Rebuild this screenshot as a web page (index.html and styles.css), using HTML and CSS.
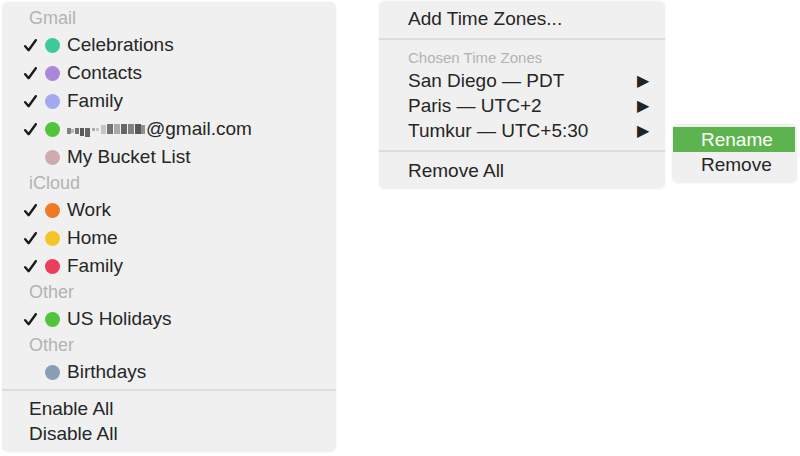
FILE: index.html
```html
<!DOCTYPE html>
<html>
<head>
<meta charset="utf-8">
<link rel="stylesheet" href="styles.css">
</head>
<body>
<div class="stage">
  <div class="menu cal">
    <div class="hdr">Gmail</div>
    <div class="item"><svg class="chk" viewBox="0 0 13 13"><path d="M1.2 7.2 L4.6 11.2 L11.8 1.2"/></svg><span class="dot" style="background:#3fc89b"></span><span>Celebrations</span></div>
    <div class="item"><svg class="chk" viewBox="0 0 13 13"><path d="M1.2 7.2 L4.6 11.2 L11.8 1.2"/></svg><span class="dot" style="background:#a987d9"></span><span>Contacts</span></div>
    <div class="item"><svg class="chk" viewBox="0 0 13 13"><path d="M1.2 7.2 L4.6 11.2 L11.8 1.2"/></svg><span class="dot" style="background:#a2a9ef"></span><span>Family</span></div>
    <div class="item"><svg class="chk" viewBox="0 0 13 13"><path d="M1.2 7.2 L4.6 11.2 L11.8 1.2"/></svg><span class="dot" style="background:#4fc53c"></span><svg class="mosaic" viewBox="0 0 79 14"><rect x="0" y="5" width="4" height="6" fill="#666"/><rect x="4" y="6" width="3" height="4" fill="#aaa"/><rect x="8" y="5" width="4" height="6" fill="#555"/><rect x="13" y="5" width="4" height="8" fill="#333"/><rect x="18" y="5" width="5" height="9" fill="#444"/><rect x="25" y="5" width="3" height="3" fill="#999"/><rect x="29" y="5" width="3" height="3" fill="#bbb"/><rect x="34" y="2" width="5" height="9" fill="#bbb"/><rect x="40" y="1" width="6" height="10" fill="#555"/><rect x="47" y="1" width="6" height="10" fill="#999"/><rect x="54" y="1" width="6" height="10" fill="#444"/><rect x="61" y="1" width="6" height="10" fill="#666"/><rect x="68" y="1" width="6" height="10" fill="#333"/><rect x="74" y="2" width="4" height="9" fill="#777"/></svg><span>@gmail.com</span></div>
    <div class="item"><span class="nochk"></span><span class="dot" style="background:#cfaaae"></span><span>My Bucket List</span></div>
    <div class="hdr">iCloud</div>
    <div class="item"><svg class="chk" viewBox="0 0 13 13"><path d="M1.2 7.2 L4.6 11.2 L11.8 1.2"/></svg><span class="dot" style="background:#ee7b24"></span><span>Work</span></div>
    <div class="item"><svg class="chk" viewBox="0 0 13 13"><path d="M1.2 7.2 L4.6 11.2 L11.8 1.2"/></svg><span class="dot" style="background:#f4c52a"></span><span>Home</span></div>
    <div class="item"><svg class="chk" viewBox="0 0 13 13"><path d="M1.2 7.2 L4.6 11.2 L11.8 1.2"/></svg><span class="dot" style="background:#ec3d5b"></span><span>Family</span></div>
    <div class="hdr">Other</div>
    <div class="item"><svg class="chk" viewBox="0 0 13 13"><path d="M1.2 7.2 L4.6 11.2 L11.8 1.2"/></svg><span class="dot" style="background:#50c53c"></span><span>US Holidays</span></div>
    <div class="hdr">Other</div>
    <div class="item"><span class="nochk"></span><span class="dot" style="background:#8b9cb5"></span><span>Birthdays</span></div>
    <div class="sep sep-l"></div>
    <div class="plain">Enable All</div>
    <div class="plain">Disable All</div>
  </div>

  <div class="menu tz">
    <div class="plain">Add Time Zones...</div>
    <div class="sep sep-r"></div>
    <div class="sub-hdr">Chosen Time Zones</div>
    <div class="plain arrow-row"><span>San Diego — PDT</span><span class="arr">▶</span></div>
    <div class="plain arrow-row"><span>Paris — UTC+2</span><span class="arr">▶</span></div>
    <div class="plain arrow-row"><span>Tumkur — UTC+5:30</span><span class="arr">▶</span></div>
    <div class="sep sep-r"></div>
    <div class="plain">Remove All</div>
  </div>

  <div class="menu submenu">
    <div class="sub-item active">Rename</div>
    <div class="sub-item">Remove</div>
  </div>
</div>
</body>
</html>
```

FILE: styles.css
```css
* { box-sizing: border-box; }
html, body {
  margin: 0;
  padding: 0;
  background: #ffffff;
  font-family: "Liberation Sans", Arial, sans-serif;
  color: #262626;
}
.stage {
  position: relative;
  width: 800px;
  height: 456px;
  overflow: hidden;
}
.menu {
  position: absolute;
  background: #f0f0f0;
  border-radius: 6px;
  box-shadow: 0 0 0 1px rgba(0,0,0,0.025);
  display: flex;
  flex-direction: column;
}
.cal {
  left: 2px;
  top: 2px;
  width: 334px;
  height: 450px;
  padding-top: 4px;
}
.cal .hdr,
.cal .plain {
  padding-left: 27px;
}
.hdr {
  height: 25px;
  line-height: 25px;
  font-size: 18px;
  color: #b3b3b3;
}
.item {
  height: 28px;
  display: flex;
  align-items: center;
  padding-left: 22px;
  font-size: 19px;
}
.chk {
  width: 13px;
  height: 13px;
  flex: none;
  margin-top: 1px;
}
.chk path {
  fill: none;
  stroke: #1c1c1c;
  stroke-width: 2.4;
  stroke-linecap: round;
  stroke-linejoin: round;
}
.nochk {
  width: 13px;
  flex: none;
}
.dot {
  width: 15px;
  height: 15px;
  border-radius: 50%;
  margin-left: 8px;
  margin-right: 7px;
  flex: none;
}
.mosaic {
  width: 79px;
  height: 14px;
  flex: none;
  opacity: 0.8;
  margin-top: 1px;
}
.sep {
  flex: none;
  position: relative;
}
.sep::after {
  content: "";
  position: absolute;
  left: 0;
  right: 0;
  height: 2px;
  background: #dcdcdc;
}
.sep-l { height: 10px; }
.sep-l::after { top: 2.5px; }
.sep-r { height: 15px; }
.sep-r::after { top: 7px; }
.plain {
  height: 25px;
  line-height: 25px;
  padding-left: 29px;
  font-size: 19px;
}
.tz {
  left: 379px;
  top: 1px;
  width: 286px;
  height: 188px;
  padding-top: 4.5px;
}
.sub-hdr {
  height: 22.5px;
  padding-top: 2.5px;
  line-height: 20px;
  padding-left: 29px;
  font-size: 15px;
  color: #b3b3b3;
}
.arrow-row {
  display: flex;
  justify-content: space-between;
  padding-right: 16px;
}
.arr {
  font-size: 16px;
  color: #222222;
}
.submenu {
  left: 672px;
  top: 124px;
  width: 125px;
  height: 59px;
  padding: 3px 2px 0 1px;
}
.sub-item {
  height: 25px;
  line-height: 25px;
  padding-left: 28px;
  font-size: 19px;
}
.sub-item.active {
  background: #5db44f;
  color: #ffffff;
}
```
